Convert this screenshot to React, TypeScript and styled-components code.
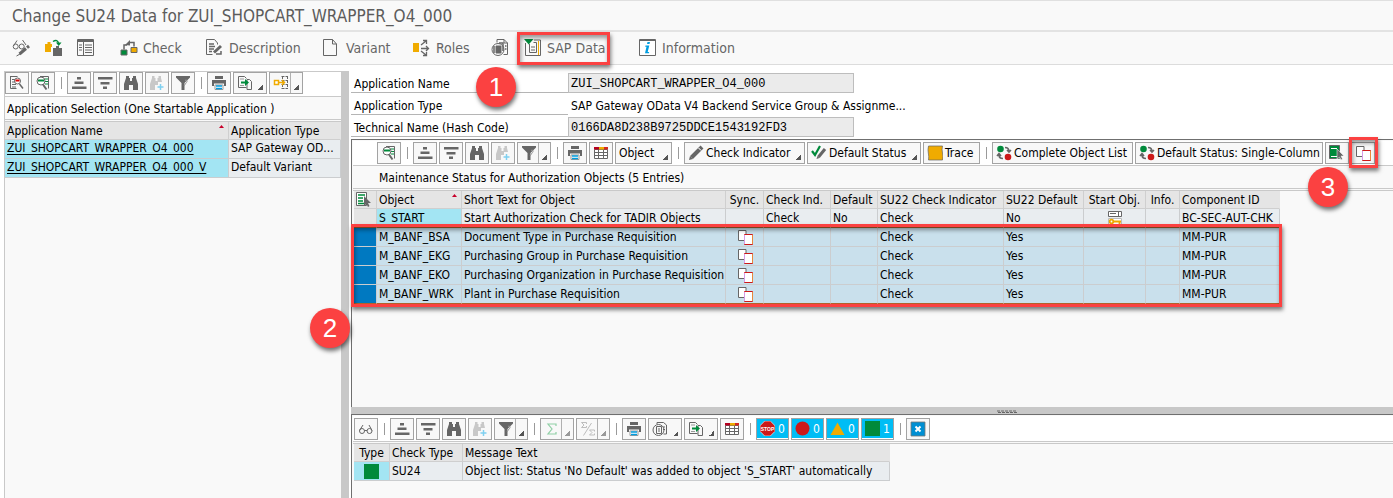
import React from 'react';
import styled, { createGlobalStyle } from 'styled-components';

const UI = '"DejaVu Sans Condensed", "DejaVu Sans", sans-serif';
const GREY = '#666666';
const LINE = '#c9c9c9';
const RED = '#fb4141';
const GREEN = '#008a3b';
const AMBER = '#f0ab00';

const GlobalStyle = createGlobalStyle`
  * { box-sizing: border-box; }
  body { margin: 0; background: #fff; color: #000; font: 12px/16px ${UI}; }
  button, input { font: inherit; color: inherit; margin: 0; }
  svg { display: block; flex: none; }
`;

/* ---------- layout ---------- */

const Page = styled.div`
  display: flex;
  flex-direction: column;
  height: 100vh;
  overflow: hidden;
`;

const TitleBar = styled.header`
  flex: none;
  padding: 5px 12px 4px;
  border-top: 1px solid #e0e0e0;
  border-bottom: 2px solid #e3e3e3;
  background: #f9f9f9;
`;

const Title = styled.h1`
  margin: 0;
  font-size: 17px;
  line-height: 20px;
  font-weight: 400;
  color: #5c5c5c;
`;

const MainToolbar = styled.nav`
  flex: none;
  display: flex;
  align-items: center;
  height: 33px;
  padding-left: 12px;
  border-bottom: 1px solid #dcdcdc;
  background: #f9f9f9;
`;

const ToolItem = styled.button<{ $w: number }>`
  position: relative;
  display: flex;
  align-items: center;
  gap: 5px;
  width: ${(p) => p.$w}px;
  height: 32px;
  padding: 0;
  border: 0;
  background: none;
  font-size: 14px;
  color: ${GREY};
  white-space: nowrap;
`;

const Body = styled.main`
  flex: 1;
  display: flex;
  min-height: 0;
  padding: 6px 0 0 5px;
`;

const SidePanel = styled.section`
  flex: none;
  width: 336px;
  overflow: hidden;
  border-top: 1px solid ${LINE};
  box-shadow: -1px 0 ${LINE};
  background: #f9f9f9;
`;

const VSplitter = styled.div`
  flex: none;
  width: 8px;
  margin-right: 2px;
  background: #c8c8c8;
`;

const Content = styled.div`
  flex: 1;
  display: flex;
  flex-direction: column;
  min-width: 0;
`;

const Form = styled.form`
  padding-top: 2px;
`;

const FormRow = styled.div`
  display: flex;
  align-items: flex-start;
  height: 22px;
`;

const FieldLabel = styled.label`
  width: 217px;
  height: 20px;
  padding: 3px 3px 0;
  border-bottom: 1px solid #b5b5b5;
`;

const Field = styled.input<{ $plain?: boolean }>`
  width: ${(p) => (p.$plain ? 380 : 286)}px;
  height: 20px;
  padding: 1px 2px 0;
  border: 1px solid ${(p) => (p.$plain ? 'transparent' : '#bdbdbd')};
  background: ${(p) => (p.$plain ? 'transparent' : '#ebebeb')};
  font: ${(p) => (p.$plain ? `12px ${UI}` : '12px "Liberation Mono", monospace')};
`;

const Frame = styled.section<{ $grow?: boolean }>`
  flex: ${(p) => (p.$grow ? '1' : '0 0 84px')};
  min-height: 0;
  border-top: 1px solid #6f6f6f;
  border-left: 1px solid #6f6f6f;
  padding: 1px 0 0 1px;
  background: #f9f9f9;
`;

const HSplitter = styled.div`
  flex: none;
  display: flex;
  align-items: flex-end;
  height: 7px;
  padding-left: 62%;
  background: #c8c8c8;
`;

const GridToolbar = styled.div<{ $indent?: number; $pad?: number }>`
  display: flex;
  align-items: center;
  gap: 2px;
  height: 25px;
  padding-left: ${(p) => p.$indent ?? 0}px;
  padding-bottom: ${(p) => p.$pad ?? 1}px;
  border-bottom: 1px solid ${LINE};
  background: #fff;
`;

const LowToolbar = styled(GridToolbar)`
  height: 26px;
  margin-bottom: 1px;
  padding-top: 1px;
`;

const Divider = styled.span`
  flex: none;
  width: 8px;
  height: 12px;
  background: linear-gradient(#9a9a9a, #9a9a9a) center / 1px 100% no-repeat;
`;

const GridButton = styled.button<{ $w?: number; $gap?: number; $cyan?: boolean }>`
  position: relative;
  flex: none;
  display: flex;
  align-items: center;
  gap: ${(p) => p.$gap ?? 2}px;
  width: ${(p) => p.$w ?? 24}px;
  height: 22px;
  padding: 0 3px;
  border: 1px solid #a3a3a3;
  background: ${(p) => (p.$cyan ? '#00bdf5' : '#f8f8f8')};
  color: ${(p) => (p.$cyan ? '#fff' : '#000')};
  box-shadow: ${(p) => (p.$cyan ? 'inset 0 -1px #fff' : 'none')};
  white-space: nowrap;
`;

const DropMark = styled.span<{ $split?: boolean; $dim?: boolean }>`
  display: flex;
  flex: none;
  align-items: flex-end;
  justify-content: flex-end;
  width: ${(p) => (p.$split ? 12 : 8)}px;
  height: 20px;
  margin: 0 -3px 0 auto;
  padding: 0 3px 3px 0;
  border-left: ${(p) => (p.$split ? '1px solid #b0b0b0' : '0')};
  &::after {
    content: '';
    width: 5px;
    height: 5px;
    background: linear-gradient(135deg, transparent 50%, ${(p) => (p.$dim ? '#999' : '#555')} 50%);
  }
`;

const Caption = styled.h2<{ $indent: number }>`
  margin: 0 0 1px;
  height: 23px;
  padding: 4px 0 0 ${(p) => p.$indent}px;
  border-bottom: 1px solid ${LINE};
  font-size: 12px;
  line-height: 16px;
  font-weight: 400;
`;

const TableArea = styled.div`
  position: relative;
  border-top: 1px solid ${LINE};
  padding-left: 1px;
`;

const LeftTableArea = styled(TableArea)`
  padding-left: 0;
`;

const TableBox = styled.div`
  position: relative;
  width: fit-content;
`;

const Table = styled.table<{ $w: number }>`
  width: ${(p) => p.$w}px;
  table-layout: fixed;
  border-spacing: 0;
`;

const Th = styled.th<{ $center?: boolean }>`
  height: 18px;
  padding: 1px 2px 0;
  border-right: 1px solid #cfcfcf;
  border-bottom: 1px solid #cfcfcf;
  background: #e5e5e5;
  font-weight: 400;
  line-height: 16px;
  text-align: ${(p) => (p.$center ? 'center' : 'left')};
  white-space: nowrap;
  &:last-child { border-right-color: #e5e5e5; }
`;

const SortHead = styled.span`
  display: flex;
  justify-content: space-between;
  &::after {
    content: '';
    width: 5px;
    height: 3px;
    margin: 2px 2px 0 0;
    background: #c8002a;
    clip-path: polygon(50% 0, 100% 100%, 0 100%);
  }
`;

type Tone = 'row' | 'key' | 'picked' | 'selector' | 'blank';
const tones: Record<Tone, string> = {
  row: '#e9edf0',
  key: '#a3e5f3',
  picked: '#c9e0ec',
  selector: '#0079c1',
  blank: '#e5e5e5',
};

const Row = styled.tr<{ $edge?: boolean; $high?: boolean }>`
  & > td {
    border-bottom-color: ${(p) => (p.$edge ? '#b8622a' : '#cbcdcf')};
    vertical-align: ${(p) => (p.$high ? 'top' : 'middle')};
  }
`;

const Td = styled.td<{ $tone: Tone }>`
  height: 19px;
  padding: 0 2px;
  border-right: 1px solid #cbcdcf;
  border-bottom: 1px solid #cbcdcf;
  background: ${(p) => tones[p.$tone]};
  line-height: 16px;
  white-space: nowrap;
  overflow: hidden;
  & > svg { margin: 0 auto; }
`;

const AppLink = styled.a`
  color: #000;
  text-decoration: underline;
  text-underline-offset: 2px;
`;

/* ---------- annotations ---------- */

const Outline = styled.span<{ $box: string }>`
  position: absolute;
  inset: ${(p) => p.$box};
  border: 3px solid ${RED};
  box-shadow: 1px 3px 4px rgba(0, 0, 0, 0.5), inset 1px 3px 4px rgba(0, 0, 0, 0.4);
  pointer-events: none;
  z-index: 2;
`;

const Marker = styled.span<{ $x: number; $y: number }>`
  position: absolute;
  left: ${(p) => p.$x}px;
  top: ${(p) => p.$y}px;
  display: flex;
  align-items: center;
  justify-content: center;
  width: 40px;
  height: 40px;
  border-radius: 50%;
  background: ${RED};
  box-shadow: 1px 3px 4px rgba(0, 0, 0, 0.55);
  color: #fff;
  font: 26px/40px "Liberation Sans", sans-serif;
  z-index: 3;
`;

/* ---------- icons ---------- */

const shapes: Record<string, React.ReactNode> = {
  displayChange: (
    <g fill="none" stroke={GREY}>
      <path d="M1.500 7 5 1.500M14 6 10.500 1" />
      <circle cx="3.700" cy="7.500" r="2.500" />
      <circle cx="9.700" cy="7.500" r="2.500" />
      <path d="M7.500 15 14 9.500" strokeWidth="3" />
      <path d="M15 8.700l2-1.700" strokeWidth="3" />
      <path d="M4.500 17 8 15" />
    </g>
  ),
  otherObject: (
    <>
      <path d="M0 5h7v3H6v5H0zM2.500 3h3v2h-3z" fill={AMBER} />
      <path d="M8 9h9v8H8zM11 7h3v2h-3z" fill={GREY} />
      <path d="M8 2.500c3-2 5-1 5.500 2" fill="none" stroke={GREEN} strokeWidth="1.500" />
      <path d="M11 3.500h5.500L13.700 7z" fill={GREEN} />
    </>
  ),
  panel: (
    <g stroke={GREY} fill="none">
      <path d="M.5.500h16v16H.500zM.5 2.500h16M6.500 3v13" />
      <path d="M.5 1.500h16" />
      <path d="M2 6h3M2 8.500h3M2 11h3M8 6h7M8 8.500h7M8 11h7M8 13.500h7" />
    </g>
  ),
  check: (
    <>
      <path d="M4 10.500V6h3M9 3.500h5v4" fill="none" stroke={GREY} strokeWidth="1.500" />
      <path d="M5 6l5-5v5.500z" fill={GREY} />
      <path d="M1 11h6v5H1z" fill={GREEN} stroke={GREY} />
      <path d="M11 8.500h6v5h-6z" fill={AMBER} stroke={GREY} />
    </>
  ),
  description: (
    <g fill="none" stroke={GREY}>
      <path d="M11.500 5.500V4L8.500.500H.500v15h6" />
      <path d="M3 5h5M3 7.500h6M3 10h5M3 12.500h3" strokeWidth="1.300" />
      <path d="M8 13.500 15 7" strokeWidth="3" />
      <path d="M10 15h5v-3" strokeWidth="1.500" />
    </g>
  ),
  sheet: <path d="M.5.500h9l4 4.500v11.500H.500zM9.500.500V5h4" fill="none" stroke={GREY} />,
  roles: (
    <>
      <path d="M0 4h6v9H0z" fill={AMBER} />
      <path d="M8 6l5-4M8 9.500h7M8 12l5 4M10 1.500h3.500V5M13 7l2.500 2.500L13 12M10 16.500h3.500V13" fill="none" stroke={GREY} strokeWidth="1.300" />
    </>
  ),
  variantCopy: (
    <g fill="none" stroke={GREY}>
      <path d="M6 3.500V.500h7L16.500 4v11.500h-4M13 .500V4h3.500" />
      <circle cx="7" cy="10.500" r="6" />
      <path d="M5 7h5v7H5z" fill={GREY} />
      <path d="M3 7v7M8 4h4v8M14 7h1.500M14 10h1.500" strokeWidth="1.500" />
    </g>
  ),
  sapData: (
    <>
      <path d="M1.500 4v12.500H16.500V1H10" fill="none" stroke={GREY} />
      <path d="M5.500 5v8.500h7v-10h-3M7 8h4M7 11h4" fill="none" stroke={GREY} />
      <path d="M14.500 2v14" stroke={AMBER} />
      <path d="M0 0h9.500L4.700 5.500z" fill={GREEN} />
    </>
  ),
  info: (
    <>
      <path d="M.5.500h16v16H.500zM.500 1.500h16" fill="#fff" stroke={GREY} />
      <path d="M8.500 3h2.500l-.5 2H8zM6.500 6.500h3.800L8.700 13h1.500l-.3 1.200H6L7.500 7.800H6.200z" fill="#009de0" />
    </>
  ),
  detail: (
    <>
      <path d="M1.500 1.500h7M1.500 1v12.500h6" fill="none" stroke={GREY} />
      <path d="M3 4.500h4M3 7h3M3 9.500h4M3 12h4" stroke={GREY} />
      <circle cx="8.500" cy="6" r="3" fill="#fff" stroke={GREY} />
      <path d="M6.500 5.500h4" stroke="#d00" strokeWidth="2" />
      <path d="M10.500 9 14 13.500" stroke={GREY} strokeWidth="1.500" />
    </>
  ),
  detailGreen: (
    <>
      <path d="M5 1.500h8.500v12" fill="none" stroke={GREY} />
      <path d="M10 4h3M10 6.500h3M10 9h3" stroke={GREEN} />
      <circle cx="6" cy="6" r="4" fill="#fff" stroke={GREY} />
      <path d="M3 5.500h6" stroke={GREEN} strokeWidth="2" />
      <path d="M8 9.500l3.500 5" stroke={GREY} strokeWidth="2" />
    </>
  ),
  sortAsc: <path d="M6 2h4v2.500H6zM3.500 6.500h9V9h-9zM1 11.500h14.500V14H1z" fill={GREY} />,
  sortDesc: <path d="M1 2h14.500v2.500H1zM3.500 7h9v2.500h-9zM6 11.500h4V14H6z" fill={GREY} />,
  find: <path d="M3 1h3v2h1v3h2V3h1V1h3v2l2 6v6h-5v-5H6v5H1V9l2-6z" fill={GREY} />,
  findNext: (
    <>
      <path d="M3 1h2.500v2h1v3h2V3h1V1H12v2l1 4H9v3H6v5H1V9l2-6z" fill="#c8c8c8" />
      <path d="M11.500 9v6M8.500 12h6" stroke="#7fd0f0" strokeWidth="1.500" />
    </>
  ),
  filter: (
    <>
      <path d="M1 1h14v1.500L9.500 8v7H6.500V8L1 2.500z" fill={GREY} />
      <path d="M10 5.500c2-1.500 3 1 1 2.500l-2 3" fill="none" stroke="#999" />
    </>
  ),
  print: (
    <>
      <path d="M4 1h8v3H4z" fill={GREY} />
      <path d="M1 5h14v6h-2V8.500H3V11H1z" fill={GREY} />
      <path d="M4 10h8v4.500H4z" fill="#fff" stroke="#999" />
      <path d="M5 11h6M5 13.500h6" stroke="#009de0" strokeWidth="1.500" />
    </>
  ),
  exportDoc: (
    <>
      <path d="M9.500 12.500H1.500v-11h6l2 2M10 4.500h2.500l2 2v8H10V4.500" fill="none" stroke={GREY} />
      <path d="M3 4h4M3 10.500h4" stroke="#999" />
      <path d="M4 6.500h4V4l4 3.500-4 3.500V8.500H4z" fill={GREEN} />
    </>
  ),
  layout: (
    <>
      <path d="M8.500 1.500h6M8.500 5.500h6M8.500 9.500h6M8.500 13.500h6M9.500 1v13M14.500 1v13" stroke={GREY} strokeDasharray="3 1" />
      <path d="M1.500 5.500h4v4h-4z" fill="#fff" stroke={AMBER} strokeWidth="1.500" />
      <path d="M6 7.500h5M9 5l2.500 2.500L9 10" fill="none" stroke={AMBER} strokeWidth="1.500" />
    </>
  ),
  table: (
    <>
      <path d="M1.500 4.500h13v9h-13zM1.500 7.500h13M1.500 10.500h13M5.500 5v8M10.500 5v8" fill="#fff" stroke={GREY} />
      <path d="M1 2h5v2.500H1z" fill="#b5001f" />
      <path d="M6 2h5v2.500H6z" fill={AMBER} />
      <path d="M11 2h4v2.500h-4z" fill="#d4281e" />
    </>
  ),
  pencil: (
    <>
      <path d="M3.500 12.500 12 4" stroke={GREY} strokeWidth="4" />
      <path d="M12 4l2-2" stroke={GREY} strokeWidth="4" />
      <path d="M10.500 3 13 5.500" stroke="#fff" />
      <path d="M1 15l1-4 3 3z" fill={GREY} />
    </>
  ),
  tickPencil: (
    <>
      <path d="M1 6l3 4L9 1" fill="none" stroke={GREEN} strokeWidth="2.200" />
      <path d="M7.500 12 14 4" stroke={GREY} strokeWidth="3" />
      <path d="M5.500 14l1-3 2 2z" fill={GREY} />
    </>
  ),
  trace: (
    <path d="M1.500 1h14c-1.500 5 1.500 9 0 14h-14c1-5-1.500-9 0-14z" fill={AMBER} stroke={GREY} strokeWidth=".7" />
  ),
  swap: (
    <>
      <circle cx="4.500" cy="4" r="3.300" fill={GREEN} />
      <circle cx="12" cy="12" r="3.300" fill="#cc1919" />
      <path d="M9 2.500c3 0 4 1 4 4M11 5l2 2 2-2M7 13.500c-3 0-4-1-4-4M1 11l2-2.500L5 11" fill="none" stroke={GREY} strokeWidth="1.600" />
    </>
  ),
  selectAll: (
    <>
      <path d="M.5.500h10v13H.500z" fill="#fff" stroke={GREY} />
      <path d="M2 3h7M2 6h5M2 9h5M2 11.500h6" stroke={GREEN} strokeWidth="1.500" />
      <path d="M8 4v10l2.500-2 1.500 3 1.500-1-1.500-3H15z" fill={GREY} />
    </>
  ),
  selectBlock: (
    <>
      <path d="M.5.500h10v13H.500z" fill={GREEN} stroke={GREY} />
      <path d="M2 3.500h6M2 11.500h6" stroke="#fff" />
      <path d="M8 4v10l2.500-2 1.500 3 1.500-1-1.500-3H15z" fill={GREY} stroke="#fff" strokeWidth=".5" />
    </>
  ),
  sync: (
    <>
      <path d="M1.500 1.500h7.500v10h-7.500z" fill="#fff" stroke={GREY} />
      <path d="M7.500 5.500h8v10h-8z" fill="#fff" stroke="#cc1919" />
      <path d="M7.500 6v9" stroke="#d79ae8" />
      <path d="M15.500 6v9" stroke="#e8883a" />
    </>
  ),
  startObj: (
    <>
      <path d="M1.500 1.500h13v5h-13zM11.500 1.500v5M3 3.500h6" fill="#fff" stroke={GREY} />
      <path d="M1.500 15V8.500h13V15" fill="#fff" stroke="#bbb" />
      <circle cx="4.500" cy="11.500" r="1.800" fill="none" stroke={AMBER} strokeWidth="1.800" />
      <path d="M6 11.500h8M12.500 11.500v3" stroke={AMBER} strokeWidth="1.800" />
    </>
  ),
  glasses: (
    <g fill="none" stroke={GREY}>
      <circle cx="4" cy="10" r="2.500" />
      <circle cx="11.500" cy="10" r="2.500" />
      <path d="M6.500 9.500h2.500M1.500 9.500 5 4M14 9.500 11 4" />
    </g>
  ),
  sum: <path d="M12 5V3H4l4 5-4 5h8v-2" fill="none" stroke="#8fcfa5" strokeWidth="1.200" />,
  subtotal: (
    <g fill="none" stroke="#bdbdbd">
      <path d="M6.500 3V1.500h-5L4 4 1.500 6.500h5V5M14.500 10.500V9h-5l2.500 2.500L9.500 14h5v-1.500M3.500 14.500 11.500 2" />
    </g>
  ),
  views: (
    <g fill="none" stroke={GREY}>
      <path d="M5 3V1.500h6.500L14.500 4v9h-3" />
      <circle cx="6.500" cy="9" r="5.500" />
      <path d="M4.500 5.500h5v7h-5zM6 8h2M6 10h2M11 6h2M11 8.500h2" />
    </g>
  ),
  stop: (
    <>
      <path d="M4.700 0h5.600L15 4.700v5.600L10.300 15H4.700L0 10.300V4.700z" fill="#cc1919" stroke="#fff" strokeWidth=".6" />
      <text x="7.500" y="9.500" textAnchor="middle" fontSize="5" fontWeight="700" fill="#fff" fontFamily="Liberation Sans, sans-serif">STOP</text>
    </>
  ),
  error: <circle cx="7.500" cy="7.500" r="7" fill="#cc1919" />,
  warning: <path d="M7.500 1.500 14.500 14H.500z" fill={AMBER} />,
  success: <path d="M0 0h15v15H0z" fill={GREEN} />,
  close: (
    <>
      <path d="M1 1h14v14H1z" fill="#008fd3" stroke="#777" strokeWidth=".8" />
      <path d="M5.500 5.500l5 5M10.500 5.500l-5 5" stroke="#fff" strokeWidth="2" />
    </>
  ),
};

const Icon = ({ name, size = 16 }: { name: string; size?: number }) => (
  <svg width={size} height={size} viewBox={`0 0 ${size} ${size}`} aria-hidden="true">
    {shapes[name]}
  </svg>
);

const IconBtn = ({ name, label, children }: { name: string; label: string; children?: React.ReactNode }) => (
  <GridButton aria-label={label}>
    <Icon name={name} />
    {children}
  </GridButton>
);

const DropBtn = ({ name, label, split, dim }: { name: string; label: string; split?: boolean; dim?: boolean }) => (
  <GridButton $w={34} $gap={0} aria-label={label}>
    <Icon name={name} />
    <DropMark $split={split} $dim={dim} />
  </GridButton>
);

const Grip = () => (
  <svg width="20" height="4" viewBox="0 0 20 4" aria-hidden="true">
    <path d="M0 1h3M4 1h3M8 1h3M12 1h3M16 1h3M1 2.500h3M5 2.500h3M9 2.500h3M13 2.500h3M17 2.500h3" stroke="#666" />
  </svg>
);

/* ---------- data ---------- */

const menu = [
  { icon: 'displayChange', label: '', w: 33 },
  { icon: 'otherObject', label: '', w: 32 },
  { icon: 'panel', label: '', w: 43 },
  { icon: 'check', label: 'Check', w: 86 },
  { icon: 'description', label: 'Description', w: 117 },
  { icon: 'sheet', label: 'Variant', w: 90 },
  { icon: 'roles', label: 'Roles', w: 78 },
  { icon: 'variantCopy', label: '', w: 33 },
  { icon: 'sapData', label: 'SAP Data', w: 115 },
  { icon: 'info', label: 'Information', w: 100 },
];

const objectCols = [23, 85, 264, 38, 67, 47, 126, 80, 62, 34, 100];

const objects = [
  { id: 'M_BANF_BSA', text: 'Document Type in Purchase Requisition' },
  { id: 'M_BANF_EKG', text: 'Purchasing Group in Purchase Requisition' },
  { id: 'M_BANF_EKO', text: 'Purchasing Organization in Purchase Requisition' },
  { id: 'M_BANF_WRK', text: 'Plant in Purchase Requisition' },
];

const counts = [
  { icon: 'stop', n: 0, label: 'Aborted' },
  { icon: 'error', n: 0, label: 'Errors' },
  { icon: 'warning', n: 0, label: 'Warnings' },
  { icon: 'success', n: 1, label: 'Successes' },
];

const Cols = ({ widths }: { widths: number[] }) => (
  <colgroup>
    {widths.map((w, i) => (
      <col key={i} width={w} />
    ))}
  </colgroup>
);

/* ---------- page parts ---------- */

const Applications = () => (
  <SidePanel>
    <GridToolbar $pad={3}>
      <IconBtn name="detail" label="Details" />
      <IconBtn name="detailGreen" label="Choose" />
      <Divider />
      <IconBtn name="sortAsc" label="Sort ascending" />
      <IconBtn name="sortDesc" label="Sort descending" />
      <IconBtn name="find" label="Find" />
      <IconBtn name="findNext" label="Find next" />
      <IconBtn name="filter" label="Filter" />
      <Divider />
      <IconBtn name="print" label="Print" />
      <DropBtn name="exportDoc" label="Export" />
      <DropBtn name="layout" label="Layout" split />
    </GridToolbar>
    <Caption $indent={2}>Application Selection (One Startable Application )</Caption>
    <LeftTableArea>
      <Table $w={336}>
        <Cols widths={[224, 112]} />
        <thead>
          <tr>
            <Th><SortHead>Application Name</SortHead></Th>
            <Th>Application Type</Th>
          </tr>
        </thead>
        <tbody>
          <Row $high>
            <Td $tone="key"><AppLink href="#app">ZUI_SHOPCART_WRAPPER_O4_000</AppLink></Td>
            <Td $tone="row">SAP Gateway OD...</Td>
          </Row>
          <Row $high>
            <Td $tone="key"><AppLink href="#variant">ZUI_SHOPCART_WRAPPER_O4_000_V</AppLink></Td>
            <Td $tone="row">Default Variant</Td>
          </Row>
        </tbody>
      </Table>
    </LeftTableArea>
  </SidePanel>
);

const Objects = () => (
  <Frame $grow>
    <GridToolbar $indent={24}>
      <IconBtn name="detailGreen" label="Details" />
      <Divider />
      <IconBtn name="sortAsc" label="Sort ascending" />
      <IconBtn name="sortDesc" label="Sort descending" />
      <IconBtn name="find" label="Find" />
      <IconBtn name="findNext" label="Find next" />
      <DropBtn name="filter" label="Filter" split />
      <Divider />
      <IconBtn name="print" label="Print" />
      <IconBtn name="table" label="Layout" />
      <GridButton $w={57}>Object<DropMark /></GridButton>
      <Divider />
      <GridButton $w={121}><Icon name="pencil" />Check Indicator<DropMark /></GridButton>
      <GridButton $w={114}><Icon name="tickPencil" />Default Status<DropMark /></GridButton>
      <GridButton $w={57}><Icon name="trace" />Trace</GridButton>
      <Divider />
      <GridButton $w={141}><Icon name="swap" />Complete Object List</GridButton>
      <GridButton $w={188}><Icon name="swap" />Default Status: Single-Column</GridButton>
      <IconBtn name="selectBlock" label="Select block" />
      <IconBtn name="sync" label="Synchronize">
        <Outline $box="-6px -4px -5px -3px" />
        <Marker $x={-44} $y={24}>3</Marker>
      </IconBtn>
    </GridToolbar>
    <Caption $indent={26}>Maintenance Status for Authorization Objects (5 Entries)</Caption>
    <TableArea>
      <TableBox>
        <Table $w={926}>
          <Cols widths={objectCols} />
          <thead>
            <tr>
              <Th aria-label="Select all"><Icon name="selectAll" /></Th>
              <Th><SortHead>Object</SortHead></Th>
              <Th>Short Text for Object</Th>
              <Th $center>Sync.</Th>
              <Th>Check Ind.</Th>
              <Th>Default</Th>
              <Th>SU22 Check Indicator</Th>
              <Th>SU22 Default</Th>
              <Th $center>Start Obj.</Th>
              <Th $center>Info.</Th>
              <Th>Component ID</Th>
            </tr>
          </thead>
          <tbody>
            <Row $edge>
              <Td $tone="blank" />
              <Td $tone="key">S_START</Td>
              <Td $tone="row">Start Authorization Check for TADIR Objects</Td>
              <Td $tone="row" />
              <Td $tone="row">Check</Td>
              <Td $tone="row">No</Td>
              <Td $tone="row">Check</Td>
              <Td $tone="row">No</Td>
              <Td $tone="row"><Icon name="startObj" /></Td>
              <Td $tone="row" />
              <Td $tone="row">BC-SEC-AUT-CHK</Td>
            </Row>
            {objects.map((o, i) => (
              <Row key={o.id} $edge={i === objects.length - 1}>
                <Td $tone="selector" />
                <Td $tone="picked">{o.id}</Td>
                <Td $tone="picked">{o.text}</Td>
                <Td $tone="picked"><Icon name="sync" /></Td>
                <Td $tone="picked" />
                <Td $tone="picked" />
                <Td $tone="picked">Check</Td>
                <Td $tone="picked">Yes</Td>
                <Td $tone="picked" />
                <Td $tone="picked" />
                <Td $tone="picked">MM-PUR</Td>
              </Row>
            ))}
          </tbody>
        </Table>
        <Outline $box="33px -2px -3px -3px" />
        <Marker $x={-44} $y={117}>2</Marker>
      </TableBox>
    </TableArea>
  </Frame>
);

const Messages = () => (
  <Frame>
    <LowToolbar $indent={1}>
      <IconBtn name="glasses" label="Display" />
      <Divider />
      <IconBtn name="sortAsc" label="Sort ascending" />
      <IconBtn name="sortDesc" label="Sort descending" />
      <IconBtn name="find" label="Find" />
      <IconBtn name="findNext" label="Find next" />
      <DropBtn name="filter" label="Filter" split />
      <Divider />
      <DropBtn name="sum" label="Total" split dim />
      <DropBtn name="subtotal" label="Subtotals" split dim />
      <Divider />
      <IconBtn name="print" label="Print" />
      <DropBtn name="views" label="Views" />
      <DropBtn name="exportDoc" label="Export" />
      <IconBtn name="table" label="Layout" />
      <Divider />
      {counts.map((c) => (
        <GridButton key={c.icon} $w={33} $gap={3} $cyan aria-label={c.label}>
          <Icon name={c.icon} size={15} />
          {c.n}
        </GridButton>
      ))}
      <Divider />
      <IconBtn name="close" label="Close" />
    </LowToolbar>
    <TableArea>
      <Table $w={536}>
        <Cols widths={[36, 73, 427]} />
        <thead>
          <tr>
            <Th $center>Type</Th>
            <Th>Check Type</Th>
            <Th>Message Text</Th>
          </tr>
        </thead>
        <tbody>
          <tr>
            <Td $tone="key"><Icon name="success" size={15} /></Td>
            <Td $tone="row">SU24</Td>
            <Td $tone="row">Object list: Status 'No Default' was added to object 'S_START' automatically</Td>
          </tr>
        </tbody>
      </Table>
    </TableArea>
  </Frame>
);

export default function App() {
  return (
    <Page>
      <GlobalStyle />
      <TitleBar>
        <Title>Change SU24 Data for ZUI_SHOPCART_WRAPPER_O4_000</Title>
      </TitleBar>
      <MainToolbar>
        {menu.map((m) => (
          <ToolItem key={m.icon} $w={m.w} aria-label={m.label || m.icon}>
            <Icon name={m.icon} size={18} />
            {m.label}
            {m.icon === 'sapData' && (
              <>
                <Outline $box="0 29px -1px -7px" />
                <Marker $x={-48} $y={35}>1</Marker>
              </>
            )}
          </ToolItem>
        ))}
      </MainToolbar>
      <Body>
        <Applications />
        <VSplitter />
        <Content>
          <Form>
            <FormRow>
              <FieldLabel htmlFor="app-name">Application Name</FieldLabel>
              <Field id="app-name" readOnly value="ZUI_SHOPCART_WRAPPER_O4_000" />
            </FormRow>
            <FormRow>
              <FieldLabel htmlFor="app-type">Application Type</FieldLabel>
              <Field id="app-type" $plain readOnly value="SAP Gateway OData V4 Backend Service Group &amp; Assignme..." />
            </FormRow>
            <FormRow>
              <FieldLabel htmlFor="hash">Technical Name (Hash Code)</FieldLabel>
              <Field id="hash" readOnly value="0166DA8D238B9725DDCE1543192FD3" />
            </FormRow>
          </Form>
          <Objects />
          <HSplitter><Grip /></HSplitter>
          <Messages />
        </Content>
      </Body>
    </Page>
  );
}
